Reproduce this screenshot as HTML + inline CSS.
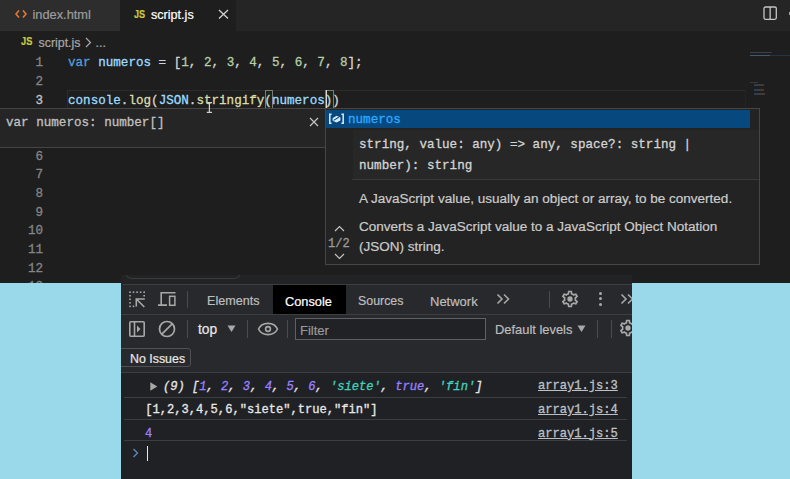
<!DOCTYPE html>
<html><head><meta charset="utf-8">
<style>
*{margin:0;padding:0;box-sizing:border-box}
html,body{width:790px;height:479px;overflow:hidden;background:#1e1e1e}
body{position:relative;font-family:"Liberation Sans",sans-serif}
.a{position:absolute}
.mono{font-family:"Liberation Mono",monospace;white-space:pre;-webkit-text-stroke:0.3px currentColor}
.sans{font-family:"Liberation Sans",sans-serif;white-space:pre;-webkit-text-stroke:0.2px currentColor}
/* tabs */
#tabbar{left:0;top:0;width:790px;height:31px;background:#252526}
#tab1{left:0;top:0;width:120px;height:31px;background:#2d2d2d}
#tab2{left:120px;top:0;width:116px;height:31px;background:#1e1e1e}
.ln{color:#858585;font-size:12.58px;line-height:18.65px;text-align:right;width:43px;left:0}
.code{font-size:12.58px;line-height:18.65px;left:68px;color:#d4d4d4}
.kw{color:#569cd6}.vr{color:#9cdcfe}.nm{color:#b5cea8}.fn{color:#dcdcaa}.br1{color:#d4d4d4}.cls{color:#9cdcfe}
.dn{color:#9980ff}.ds{color:#3fd3bd}.lnk{font-size:12.1px;line-height:15px;color:#bdc1c6;text-decoration:underline}
</style></head><body>
<div id="tabbar" class="a"></div>
<div id="tab1" class="a"></div>
<div id="tab2" class="a"></div>
<!-- tab 1 -->
<svg class="a" style="left:15px;top:9.2px" width="12" height="10" viewBox="0 0 12 10"><path d="M4 1.5 L1 5 L4 8.5 M8 1.5 L11 5 L8 8.5" stroke="#e37933" stroke-width="1.6" fill="none"/></svg>
<div class="a sans" style="left:32.5px;top:6.7px;font-size:12.8px;color:#9d9d9d">index.html</div>
<!-- tab 2 -->
<div class="a sans" style="left:133.8px;top:8.1px;font-size:10.8px;font-weight:bold;transform:scaleX(0.84);transform-origin:0 0;color:#cbcb41">JS</div>
<div class="a sans" style="left:151px;top:7.8px;font-size:12.6px;color:#ffffff">script.js</div>
<svg class="a" style="left:218px;top:9px" width="11" height="11" viewBox="0 0 11 11"><path d="M1 1 L10 9.5 M10 1 L1 9.5" stroke="#d0d0d0" stroke-width="1.3"/></svg>
<!-- split icon -->
<svg class="a" style="left:763.2px;top:6.2px" width="15" height="15" viewBox="0 0 15 15"><rect x="1" y="1" width="12.3" height="12.3" rx="1.5" stroke="#c5c5c5" stroke-width="1.3" fill="none"/><path d="M7.15 1 V13.3" stroke="#c5c5c5" stroke-width="1.3"/></svg>
<!-- breadcrumb -->
<div class="a sans" style="left:21px;top:35.3px;font-size:11px;font-weight:bold;transform:scaleX(0.84);transform-origin:0 0;color:#cbcb41">JS</div>
<div class="a sans" style="left:38.5px;top:35.8px;font-size:12.4px;color:#a9a9a9">script.js</div>
<svg class="a" style="left:85px;top:37px" width="7" height="11" viewBox="0 0 7 11"><path d="M1 1 L5.5 5.5 L1 10" stroke="#a9a9a9" stroke-width="1.2" fill="none"/></svg>
<div class="a sans" style="left:95.5px;top:35.8px;font-size:12.4px;color:#a9a9a9">...</div>

<!-- line numbers -->
<div class="a mono ln" style="top:54.3px">1
2
<span style="color:#c6c6c6">3</span>
4
5
6
7
8
9
10
11
12
13</div>
<!-- current line box -->
<div class="a" style="left:67px;top:90px;width:679px;height:19px;border:1px solid #2c2c2c;border-right-color:#232323"></div>
<!-- bracket match -->
<div class="a" style="left:264.5px;top:90px;width:8.5px;height:18.6px;border:1px solid #7a7a7a;background:rgba(0,100,0,0.12)"></div>
<div class="a" style="left:325px;top:90px;width:8.6px;height:18.6px;border:1px solid #7a7a7a;background:rgba(0,100,0,0.12)"></div>
<div class="a mono code" style="top:54.3px"><span class="kw">var</span> <span class="vr">numeros</span> = <span class="br1">[</span><span class="nm">1</span>, <span class="nm">2</span>, <span class="nm">3</span>, <span class="nm">4</span>, <span class="nm">5</span>, <span class="nm">6</span>, <span class="nm">7</span>, <span class="nm">8</span><span class="br1">]</span>;

<span class="vr">console</span>.<span class="fn">log</span><span class="br1">(</span><span class="cls">JSON</span>.<span class="fn">stringify</span><span style="color:#d4d4d4">(</span><span class="vr">numeros</span><span style="color:#d4d4d4">)</span><span class="br1">)</span></div>


<div class="a" style="left:325.8px;top:90.3px;width:1.5px;height:17.5px;background:#d8d8d8;z-index:2"></div>

<!-- minimap -->
<div class="a" style="left:750px;top:51.8px;width:22px;height:1.4px;background:#4a4f55;opacity:.7"></div>
<div class="a" style="left:750px;top:54.5px;width:40px;height:1.8px;background:#233446"></div>
<div class="a" style="left:750px;top:54.7px;width:20px;height:1.2px;background:#3f5a70"></div>
<div class="a" style="left:750px;top:82px;width:8px;height:1px;background:#3a3a3a"></div>
<div class="a" style="left:754.3px;top:84.2px;width:4.3px;height:2.2px;background:#3f5f7e;opacity:.5"></div>
<div class="a" style="left:759.4px;top:84.2px;width:5px;height:2.2px;background:#6d5343;opacity:.5"></div>
<div class="a" style="left:754.3px;top:88.9px;width:4.3px;height:2.2px;background:#3f5f7e;opacity:.5"></div>
<div class="a" style="left:759.4px;top:88.9px;width:5px;height:2.2px;background:#6d5343;opacity:.5"></div>
<div class="a" style="left:754.3px;top:93.3px;width:4.3px;height:2.2px;background:#3f5f7e;opacity:.5"></div>
<div class="a" style="left:759.4px;top:93.3px;width:6px;height:2.2px;background:#6d5343;opacity:.5"></div>
<div class="a" style="left:788.5px;top:12px;width:2px;height:2.5px;background:#a0a0a0"></div>
<!-- hover widget -->
<div class="a" style="left:-1px;top:108px;width:327px;height:40px;background:#252526;border:1px solid #454545"></div>
<div class="a mono" style="left:6px;top:114px;font-size:12.58px;line-height:18px;color:#c0c0c0">var numeros: number[]</div>
<svg class="a" style="left:309px;top:117px" width="10" height="10" viewBox="0 0 10 10"><path d="M1 1 L9 9 M9 1 L1 9" stroke="#c5c5c5" stroke-width="1.2"/></svg>
<!-- suggest widget -->
<div class="a" style="left:325px;top:108px;width:435px;height:157px;background:#232323;border:1px solid #454545"></div>
<div class="a" style="left:326px;top:110px;width:424px;height:18px;background:#07497f"></div>
<div class="a" style="left:353px;top:130px;width:406px;height:49px;background:#272727"></div>
<div class="a" style="left:352px;top:179px;width:407px;height:1px;background:#3a3a3a"></div>
<svg class="a" style="left:328px;top:112px" width="17" height="14" viewBox="0 0 17 14"><path d="M3.6 2.2 H1.8 V11.2 H3.6 M13.4 2.2 H15.2 V11.2 H13.4" stroke="#d6ebff" stroke-width="1.5" fill="none"/><path d="M4.6 6.2 L8.5 3.8 L12.4 5.6 V8.6 L8.5 10.6 L4.6 8.8 Z" fill="#d6ebff"/><path d="M5.6 8.4 L10.8 5.2" stroke="#07497f" stroke-width="1.1" fill="none"/></svg>
<div class="a mono" style="left:348px;top:111.3px;font-size:12.58px;line-height:18px;color:#2aaaff">numeros</div>
<div class="a mono" style="left:359px;top:135px;font-size:12.58px;line-height:20.5px;color:#d4d4d4">string, value: any) =&gt; any, space?: string |
number): string</div>
<div class="a sans" style="left:359px;top:188.7px;font-size:13.53px;line-height:19px;color:#cccccc">A JavaScript value, usually an object or array, to be converted.</div>
<div class="a sans" style="left:359px;top:217px;font-size:13.53px;line-height:20.4px;color:#cccccc">Converts a JavaScript value to a JavaScript Object Notation
(JSON) string.</div>
<svg class="a" style="left:334px;top:224.5px" width="11" height="7" viewBox="0 0 11 7"><path d="M1 6 L5.5 1.5 L10 6" stroke="#c5c5c5" stroke-width="1.2" fill="none"/></svg>
<div class="a mono" style="left:328px;top:237px;font-size:12px;line-height:14px;color:#9a9a9a">1/2</div>
<svg class="a" style="left:334px;top:253px" width="11" height="7" viewBox="0 0 11 7"><path d="M1 1 L5.5 5.5 L10 1" stroke="#c5c5c5" stroke-width="1.2" fill="none"/></svg>

<!-- devtools -->
<div class="a" style="left:121px;top:275px;width:511px;height:204px;background:#28292c"></div>
<div class="a" style="left:121px;top:275px;width:511px;height:9px;background:#222325"></div>
<div class="a" style="left:121px;top:275px;width:511px;height:9px;overflow:hidden"><div class="a" style="left:4px;top:-9px;width:116px;height:13px;border:1px solid #3a3b3e;border-top:none;border-radius:0 0 7px 7px"></div></div>
<div class="a" style="left:123px;top:284px;width:509px;height:1px;background:#3d3e41"></div>
<div class="a" style="left:121px;top:314px;width:511px;height:1px;background:#3d3e41"></div>
<div class="a" style="left:121px;top:373px;width:511px;height:106px;background:#202124"></div>
<div class="a" style="left:121px;top:372px;width:511px;height:1px;background:#3d3e41"></div>
<div class="a" style="left:273px;top:285px;width:73px;height:29px;background:#000000"></div>
<div class="a sans" style="left:207px;top:294px;font-size:12.6px;color:#bdbdbd">Elements</div>
<div class="a sans" style="left:285px;top:294px;font-size:12.8px;color:#ffffff">Console</div>
<div class="a sans" style="left:358px;top:294px;font-size:12.4px;color:#bdbdbd">Sources</div>
<div class="a sans" style="left:430px;top:294px;font-size:13px;color:#bdbdbd">Network</div>


<!-- devtools toolbar icons row1 -->
<svg class="a" style="left:128px;top:290px" width="18" height="18" viewBox="0 0 18 18"><g fill="#a8a8a8"><rect x="1.20" y="1.40" width="1.6" height="1.6"/><rect x="4.74" y="1.40" width="1.6" height="1.6"/><rect x="8.28" y="1.40" width="1.6" height="1.6"/><rect x="11.82" y="1.40" width="1.6" height="1.6"/><rect x="15.36" y="1.40" width="1.6" height="1.6"/><rect x="1.20" y="4.94" width="1.6" height="1.6"/><rect x="1.20" y="8.48" width="1.6" height="1.6"/><rect x="1.20" y="12.02" width="1.6" height="1.6"/><rect x="1.20" y="15.56" width="1.6" height="1.6"/><rect x="15.36" y="4.94" width="1.6" height="1.6"/><rect x="4.74" y="15.56" width="1.6" height="1.6"/></g><path d="M8.3 16.5 V9 H16.8 M8.6 9.3 L16.3 17" stroke="#a8a8a8" stroke-width="1.6" fill="none"/></svg>
<svg class="a" style="left:157px;top:290px" width="20" height="18" viewBox="0 0 20 18"><path d="M4.2 15 V2.8 H18.5 M1 15.1 H10" stroke="#a8a8a8" stroke-width="1.6" fill="none"/><rect x="12.6" y="6.3" width="5.3" height="9" stroke="#a8a8a8" stroke-width="1.5" fill="none"/></svg>
<div class="a" style="left:187px;top:291px;width:1px;height:17px;background:#4a4b4e"></div>
<div class="a" style="left:549px;top:291px;width:1px;height:17px;background:#4a4b4e"></div>
<svg class="a" style="left:496px;top:293px" width="15" height="12" viewBox="0 0 15 12"><path d="M1.5 1.5 L6 6 L1.5 10.5 M8 1.5 L12.5 6 L8 10.5" stroke="#a8a8a8" stroke-width="1.6" fill="none"/></svg>
<svg class="a" style="left:560px;top:289px" width="20" height="20" viewBox="0 0 24 24"><path fill="#a8a8a8" d="M19.43 12.98c.04-.32.07-.64.07-.98 0-.34-.03-.66-.07-.98l2.11-1.65c.19-.15.24-.42.12-.64l-2-3.46c-.09-.16-.26-.25-.44-.25-.06 0-.12.01-.17.03l-2.49 1c-.52-.4-1.08-.73-1.690-.98l-.38-2.65C14.46 2.18 14.25 2 14 2h-4c-.25 0-.46.18-.49.42l-.38 2.65c-.61.25-1.17.59-1.69.98l-2.49-1c-.06-.02-.12-.03-.18-.03-.17 0-.34.09-.43.25l-2 3.46c-.13.22-.07.49.12.64l2.11 1.65c-.04.32-.07.65-.07.98 0 .33.03.66.07.98l-2.11 1.65c-.19.15-.24.42-.12.64l2 3.46c.09.16.26.25.44.25.06 0 .12-.01.17-.03l2.49-1c.52.4 1.08.73 1.69.98l.38 2.65c.03.24.24.42.49.42h4c.25 0 .46-.18.49-.42l.38-2.65c.61-.25 1.17-.59 1.69-.98l2.49 1c.06.02.12.03.18.03.17 0 .34-.09.43-.25l2-3.46c.12-.22.07-.49-.12-.64l-2.11-1.65zm-1.98-1.71c.04.31.05.52.05.73 0 .21-.02.43-.05.73l-.14 1.13.89.7 1.08.84-.7 1.21-1.27-.51-1.04-.42-.9.68c-.43.32-.84.56-1.25.73l-1.06.43-.16 1.13-.2 1.35h-1.4l-.19-1.35-.16-1.13-1.06-.43c-.43-.18-.83-.41-1.23-.71l-.91-.7-1.06.43-1.27.51-.7-1.21 1.08-.84.89-.7-.14-1.13c-.03-.31-.05-.54-.05-.74s.02-.43.05-.73l.14-1.13-.89-.7-1.08-.84.7-1.21 1.270.51 1.04.42.9-.68c.43-.32.84-.56 1.25-.73l1.06-.43.16-1.13.2-1.35h1.39l.19 1.35.16 1.13 1.06.43c.43.18.83.41 1.23.71l.91.7 1.06-.43 1.27-.51.7 1.21-1.07.85-.89.7.14 1.13z"/><circle cx="12" cy="12" r="3.2" fill="#a8a8a8"/></svg>
<div class="a" style="left:599.3px;top:292px;width:3.2px;height:3.2px;border-radius:50%;background:#a8a8a8"></div>
<div class="a" style="left:599.3px;top:297.3px;width:3.2px;height:3.2px;border-radius:50%;background:#a8a8a8"></div>
<div class="a" style="left:599.3px;top:302.6px;width:3.2px;height:3.2px;border-radius:50%;background:#a8a8a8"></div>
<svg class="a" style="left:620px;top:293px" width="15" height="12" viewBox="0 0 15 12"><path d="M1.5 1.5 L6 6 L1.5 10.5 M8 1.5 L12.5 6 L8 10.5" stroke="#a8a8a8" stroke-width="1.6" fill="none"/></svg>

<!-- row2 -->
<svg class="a" style="left:128px;top:320px" width="18" height="18" viewBox="0 0 18 18"><rect x="1.8" y="1.8" width="14.4" height="14.4" rx="1" stroke="#a8a8a8" stroke-width="1.6" fill="none"/><path d="M6.5 2 V16" stroke="#a8a8a8" stroke-width="1.6"/><path d="M9 5.5 L12.5 9 L9 12.5 Z" fill="#a8a8a8"/></svg>
<svg class="a" style="left:158px;top:320px" width="18" height="18" viewBox="0 0 18 18"><circle cx="9" cy="9" r="7.5" stroke="#a8a8a8" stroke-width="1.7" fill="none"/><path d="M3.8 14.2 L14.2 3.8" stroke="#a8a8a8" stroke-width="1.7"/></svg>
<div class="a" style="left:187px;top:320px;width:1px;height:18px;background:#4a4b4e"></div>
<div class="a sans" style="left:198px;top:322px;font-size:13.8px;color:#e8e8e8">top</div>
<svg class="a" style="left:227px;top:324.5px" width="9" height="8" viewBox="0 0 9 8"><path d="M0.5 0.5 H8.5 L4.5 7 Z" fill="#a8a8a8"/></svg>
<div class="a" style="left:247px;top:320px;width:1px;height:18px;background:#4a4b4e"></div>
<svg class="a" style="left:257px;top:321px" width="22" height="16" viewBox="0 0 22 16"><path d="M1.5 8 C5 0.5 17 0.5 20.5 8 C17 15.5 5 15.5 1.5 8 Z" stroke="#a8a8a8" stroke-width="1.6" fill="none"/><circle cx="11" cy="8" r="2.4" stroke="#a8a8a8" stroke-width="1.6" fill="none"/></svg>
<div class="a" style="left:287px;top:320px;width:1px;height:18px;background:#4a4b4e"></div>
<div class="a" style="left:295px;top:318px;width:191px;height:22px;border:1px solid #5f6064;background:#212225"></div>
<div class="a sans" style="left:300px;top:323px;font-size:13px;color:#9a9a9a">Filter</div>
<div class="a sans" style="left:495px;top:322px;font-size:12.9px;color:#bdbdbd">Default levels</div>
<svg class="a" style="left:576.5px;top:324.7px" width="9" height="8" viewBox="0 0 9 8"><path d="M0.5 0.5 H8.5 L4.5 7 Z" fill="#a8a8a8"/></svg>
<div class="a" style="left:597px;top:320px;width:1px;height:18px;background:#4a4b4e"></div>
<div class="a" style="left:611px;top:320px;width:1px;height:18px;background:#4a4b4e"></div>
<svg class="a" style="left:618px;top:318px" width="20" height="20" viewBox="0 0 24 24"><path fill="#a8a8a8" d="M19.43 12.98c.04-.32.07-.64.07-.98 0-.34-.03-.66-.07-.98l2.11-1.65c.19-.15.24-.42.12-.64l-2-3.46c-.09-.16-.26-.25-.44-.25-.06 0-.12.01-.17.03l-2.49 1c-.52-.4-1.08-.73-1.690-.98l-.38-2.65C14.46 2.18 14.25 2 14 2h-4c-.25 0-.46.18-.49.42l-.38 2.65c-.61.25-1.17.59-1.69.98l-2.49-1c-.06-.02-.12-.03-.18-.03-.17 0-.34.09-.43.25l-2 3.46c-.13.22-.07.49.12.64l2.11 1.65c-.04.32-.07.65-.07.98 0 .33.03.66.07.98l-2.11 1.65c-.19.15-.24.42-.12.64l2 3.46c.09.16.26.25.44.25.06 0 .12-.01.17-.03l2.49-1c.52.4 1.08.73 1.69.98l.38 2.65c.03.24.24.42.49.42h4c.25 0 .46-.18.49-.42l.38-2.65c.61-.25 1.17-.59 1.69-.98l2.49 1c.06.02.12.03.18.03.17 0 .34-.09.43-.25l2-3.46c.12-.22.07-.49-.12-.64l-2.11-1.65zm-1.98-1.71c.04.31.05.52.05.73 0 .21-.02.43-.05.73l-.14 1.13.89.7 1.08.84-.7 1.21-1.27-.51-1.04-.42-.9.68c-.43.32-.84.56-1.25.73l-1.06.43-.16 1.13-.2 1.35h-1.4l-.19-1.35-.16-1.13-1.06-.43c-.43-.18-.83-.41-1.23-.71l-.91-.7-1.06.43-1.27.51-.7-1.21 1.08-.84.89-.7-.14-1.13c-.03-.31-.05-.54-.05-.74s.02-.43.05-.73l.14-1.13-.89-.7-1.08-.84.7-1.21 1.270.51 1.04.42.9-.68c.43-.32.84-.56 1.25-.73l1.06-.43.16-1.13.2-1.35h1.39l.19 1.35.16 1.13 1.06.43c.43.18.83.41 1.23.71l.91.7 1.06-.43 1.27-.51.7 1.21-1.07.85-.89.7.14 1.13z"/><circle cx="12" cy="12" r="3.2" fill="#a8a8a8"/></svg>

<!-- row3 -->
<div class="a" style="left:117px;top:348px;width:74px;height:19px;border:1px solid #4f5054;border-radius:3px"></div>
<div class="a sans" style="left:130px;top:352px;font-size:12.4px;color:#e8e8e8">No Issues</div>

<!-- console messages -->
<div class="a" style="left:124px;top:397px;width:503px;height:1px;background:#3d3e41"></div>
<div class="a" style="left:124px;top:419px;width:503px;height:1px;background:#3d3e41"></div>
<div class="a" style="left:124px;top:440px;width:503px;height:1px;background:#3d3e41"></div>
<svg class="a" style="left:150px;top:381.5px" width="8" height="9" viewBox="0 0 8 9"><path d="M0.3 0.3 L7.3 4.5 L0.3 8.7 Z" fill="#a8a8a8"/></svg>
<div class="a mono" style="left:163px;top:380px;font-size:12.1px;line-height:15px;font-style:italic;color:#e6e6e6">(9) [<span class="dn">1</span>, <span class="dn">2</span>, <span class="dn">3</span>, <span class="dn">4</span>, <span class="dn">5</span>, <span class="dn">6</span>, <span class="ds">'siete'</span>, <span class="dn">true</span>, <span class="ds">'fin'</span>]</div>
<div class="a mono" style="left:145.3px;top:403px;font-size:12.1px;line-height:15px;color:#e8e8e8">[1,2,3,4,5,6,"siete",true,"fin"]</div>
<div class="a mono" style="left:145px;top:426.5px;font-size:12px;line-height:15px;color:#9980ff">4</div>
<div class="a mono lnk" style="left:538px;top:379px">array1.js:3</div>
<div class="a mono lnk" style="left:538px;top:403px">array1.js:4</div>
<div class="a mono lnk" style="left:538px;top:426.5px">array1.js:5</div>
<svg class="a" style="left:132px;top:447.5px" width="8" height="10" viewBox="0 0 8 10"><path d="M1.5 1 L5.5 5 L1.5 9" stroke="#5f86b8" stroke-width="1.4" fill="none"/></svg>
<div class="a" style="left:146.8px;top:445.8px;width:1.4px;height:15.2px;background:#e8e8e8"></div>

<!-- mouse ibeam -->
<svg class="a" style="left:205px;top:100px;z-index:5" width="9" height="15" viewBox="0 0 9 15"><path d="M1.8 2.6 H7 M4.4 2.6 V12.4 M1.8 12.4 H7" stroke="#d0d0d0" stroke-width="1.2" fill="none"/></svg>
<!-- light blue -->
<div class="a" style="left:0;top:283px;width:121px;height:196px;background:#99d9ea"></div>
<div class="a" style="left:632px;top:283px;width:158px;height:196px;background:#99d9ea"></div>
</body></html>
